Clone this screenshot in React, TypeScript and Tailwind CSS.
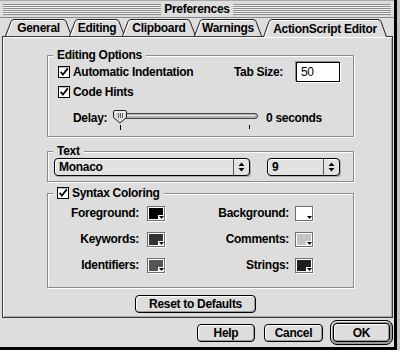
import React from "react";

const ui = "font-['Liberation_Sans',Arial,sans-serif] text-[12px] font-bold tracking-[-0.3px] text-black";
const btn =
  "flex items-center justify-center rounded-[4px] border border-black bg-[#dddddd] shadow-[inset_1px_1px_0_#fff,inset_-1px_-1px_0_#9a9a9a] leading-none";

function CheckBox() {
  return (
    <svg width="12" height="12" viewBox="0 0 12 12" className="shrink-0">
      <rect x="0.5" y="0.5" width="11" height="11" fill="#fff" stroke="#000" />
      <path d="M1.5 1.5 H10.5" stroke="#bbb" />
      <path d="M2.6 5.8 L4.9 8.6 L9.8 2.4" fill="none" stroke="#000" strokeWidth="1.7" />
    </svg>
  );
}

function Tab({ label, w, className, active }: { label: string; w: number; className: string; active?: boolean }) {
  const h = active ? 18 : 17;
  const s = 6;
  const outline = `M0.5 ${h} L${s} 2.5 Q${s + 0.8} 0.5 ${s + 3} 0.5 L${w - s - 3} 0.5 Q${w - s - 0.8} 0.5 ${w - s} 2.5 L${w - 0.5} ${h}`;
  const hi = `M2 ${h} L${s + 1.2} 3 Q${s + 1.8} 1.5 ${s + 3} 1.5 L${w - s - 3} 1.5`;
  return (
    <div className={`relative flex items-center justify-center ${className}`}>
      <svg width={w} height={h} viewBox={`0 0 ${w} ${h}`} className="absolute inset-0">
        <path d={`${outline} Z`} fill="#dddddd" stroke="none" />
        <path d={hi} fill="none" stroke="#fff" />
        <path d={outline} fill="none" stroke="#222" />
      </svg>
      <span className="relative pt-[1px]">{label}</span>
    </div>
  );
}

function Popup({ value, className }: { value: string; className: string }) {
  return (
    <div
      className={`flex h-[18px] items-stretch rounded-[4px] border border-black bg-[#e2e2e2] shadow-[inset_1px_1px_0_#fff,1px_1px_0_#aaa] ${className}`}
    >
      <div className="flex flex-1 items-center pl-[4px]">{value}</div>
      <div className="flex w-[16px] items-center justify-center border-l border-[#555]">
        <svg width="7" height="10" viewBox="0 0 7 10">
          <path d="M3.5 0.5 L6.5 4 H0.5 Z M0.5 6 H6.5 L3.5 9.5 Z" fill="#000" />
        </svg>
      </div>
    </div>
  );
}

function Swatch({ color }: { color: string }) {
  return (
    <div className="relative h-[15px] w-[18px] shrink-0 border border-[#6f6f6f] bg-white p-[1px] shadow-[1px_1px_0_#fff]">
      <div className={`h-full w-full ${color}`} />
      <div className="absolute bottom-0 right-0 flex h-[5px] w-[6px] items-center justify-center bg-white">
        <svg width="5" height="3" viewBox="0 0 5 3">
          <path d="M0 0 H5 L2.5 3 Z" fill="#000" />
        </svg>
      </div>
    </div>
  );
}

function Group({ label, className, children }: { label: React.ReactNode; className: string; children: React.ReactNode }) {
  return (
    <div
      className={`relative ml-[44px] box-border w-[307px] border border-[#8c8c8c] shadow-[1px_1px_0_#fff,inset_1px_1px_0_#fff] ${className}`}
    >
      <div className="absolute -top-[8px] left-[5px] flex items-center gap-[3px] bg-[#dddddd] px-[4px] leading-[14px]">
        {label}
      </div>
      {children}
    </div>
  );
}

function Slider() {
  return (
    <svg width="150" height="24" viewBox="0 0 150 24" className="shrink-0">
      <rect x="4.5" y="5.5" width="141" height="5" rx="2.5" fill="#b4b4b4" stroke="#444" />
      <path d="M7 7.5 H143" stroke="#e8e8e8" />
      <path d="M1.5 4 Q1.5 2.5 3 2.5 H13 Q14.5 2.5 14.5 4 V9.5 L8 15 L1.5 9.5 Z" fill="#dcdcdc" stroke="#222" />
      <path d="M2.5 4 H13.5" stroke="#fff" />
      <path d="M6.5 5 V10 M8.5 5 V10 M10.5 5 V10" stroke="#666" />
      <path d="M8.5 17 V22 M137.5 17 V21" stroke="#000" />
    </svg>
  );
}

export default function App() {
  return (
    <div className={`h-[350px] w-[400px] bg-[#c4c4c4] ${ui}`}>
      <div className="flex h-[350px] w-[397px] flex-col border-b-[3px] border-r-[3px] border-black bg-[#dddddd]">
        {/* title bar */}
        <div className="flex h-[18px] items-center border-b border-[#8a8a8a] border-t border-t-[#aaa] px-[3px]">
          <div className="h-[11px] flex-1 bg-[repeating-linear-gradient(to_bottom,#8c8c8c_0px,#8c8c8c_1px,#f2f2f2_1px,#f2f2f2_2px)]" />
          <div className="px-[3px] leading-none">Preferences</div>
          <div className="h-[11px] flex-1 bg-[repeating-linear-gradient(to_bottom,#8c8c8c_0px,#8c8c8c_1px,#f2f2f2_1px,#f2f2f2_2px)]" />
        </div>

        {/* tabs */}
        <div className="flex h-[18px] items-end pl-[5px]">
          <Tab label="General" w={67} className="h-[17px] w-[67px]" />
          <Tab label="Editing" w={56} className="-ml-[3px] h-[17px] w-[56px]" />
          <Tab label="Clipboard" w={74} className="-ml-[3px] h-[17px] w-[74px]" />
          <Tab label="Warnings" w={68} className="-ml-[2px] h-[17px] w-[68px]" />
          <Tab label="ActionScript Editor" w={124} className="z-10 -mb-[1px] ml-[1px] h-[18px] w-[124px]" active />
        </div>

        {/* panel */}
        <div className="ml-[2px] flex h-[282px] w-[391px] flex-col border border-[#3a3a3a] shadow-[inset_1px_1px_0_#fff,inset_-1px_-1px_0_#a6a6a6]">
          <Group label="Editing Options" className="mt-[18px] h-[82px]">
            <div className="flex h-[20px] items-center justify-between pl-[10px] pr-[13px] mt-[6px]">
              <div className="flex items-center gap-[3px]">
                <CheckBox />
                <span>Automatic Indentation</span>
              </div>
              <div className="flex items-center gap-[13px]">
                <span>Tab Size:</span>
                <div className="flex h-[20px] w-[44px] items-center border border-black bg-white pl-[4px] font-normal shadow-[-1px_-1px_0_#888,1px_1px_0_#fff]">
                  50
                </div>
              </div>
            </div>
            <div className="flex h-[20px] items-center gap-[3px] pl-[10px]">
              <CheckBox />
              <span>Code Hints</span>
            </div>
            <div className="mt-[6px] flex items-start pl-[25px] leading-[20px]">
              <span className="w-[39px]">Delay:</span>
              <Slider />
              <span className="ml-[4px]">0 seconds</span>
            </div>
          </Group>

          <Group label="Text" className="mt-[14px] h-[31px]">
            <div className="flex gap-[17px] pl-[6px] pt-[6px]">
              <Popup value="Monaco" className="w-[196px]" />
              <Popup value="9" className="w-[73px]" />
            </div>
          </Group>

          <Group
            label={
              <>
                <CheckBox />
                <span>Syntax Coloring</span>
              </>
            }
            className="mt-[11px] h-[95px]"
          >
            <div className="flex flex-col gap-[6px] pt-[9px]">
              {[
                ["Foreground:", "bg-black", "Background:", "bg-white"],
                ["Keywords:", "bg-[#333333]", "Comments:", "bg-[#c4c4c4]"],
                ["Identifiers:", "bg-[#555555]", "Strings:", "bg-[#1e1e1e]"],
              ].map(([a, ca, b, cb]) => (
                <div key={a} className="flex h-[20px] items-center">
                  <span className="w-[91px] text-right">{a}</span>
                  <div className="ml-[8px]">
                    <Swatch color={ca} />
                  </div>
                  <span className="w-[124px] text-right">{b}</span>
                  <div className="ml-[6px]">
                    <Swatch color={cb} />
                  </div>
                </div>
              ))}
            </div>
          </Group>

          <div className={`${btn} ml-[132px] mt-[7px] h-[18px] w-[121px]`}>Reset to Defaults</div>
        </div>

        {/* bottom buttons */}
        <div className="flex flex-1 items-center justify-end pr-[1px]">
          <div className={`${btn} h-[18px] w-[58px]`}>Help</div>
          <div className={`${btn} ml-[9px] h-[18px] w-[59px]`}>Cancel</div>
          <div className="ml-[7px] flex h-[25px] w-[63px] rounded-[7px] border border-black bg-[#9a9a9a] p-[2px] shadow-[inset_1px_1px_0_#eee]">
            <div className={`${btn} h-full w-full`}>OK</div>
          </div>
        </div>
      </div>
    </div>
  );
}
